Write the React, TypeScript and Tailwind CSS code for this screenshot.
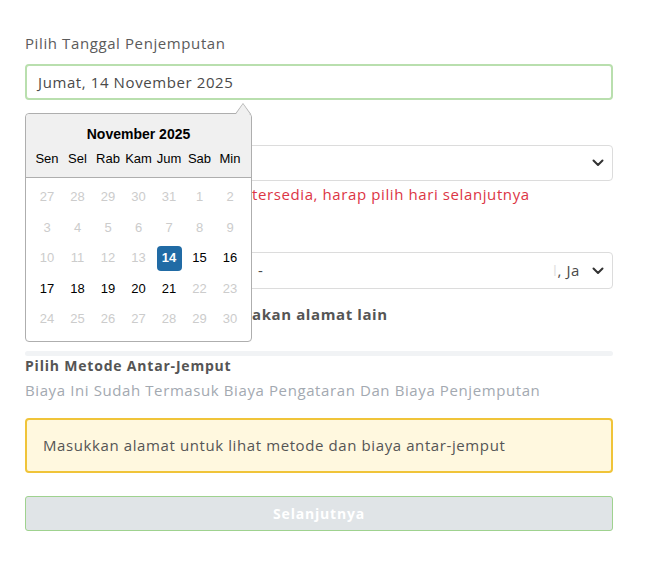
import React from "react";

const font = { fontFamily: '"Open Sans", "Noto Sans", sans-serif' };

function Chevron() {
  return (
    <svg width="12" height="8" viewBox="0 0 12 8" className="shrink-0">
      <path d="M1.5 1.5 L6 6 L10.5 1.5" fill="none" stroke="#333" strokeWidth="2" strokeLinecap="round" strokeLinejoin="round" />
    </svg>
  );
}

type Day = { n: number; on?: boolean; sel?: boolean };

const rows: Day[][] = [
  [27, 28, 29, 30, 31, 1, 2].map((n) => ({ n })),
  [3, 4, 5, 6, 7, 8, 9].map((n) => ({ n })),
  [
    { n: 10 }, { n: 11 }, { n: 12 }, { n: 13 },
    { n: 14, sel: true }, { n: 15, on: true }, { n: 16, on: true },
  ],
  [
    { n: 17, on: true }, { n: 18, on: true }, { n: 19, on: true }, { n: 20, on: true },
    { n: 21, on: true }, { n: 22 }, { n: 23 },
  ],
  [24, 25, 26, 27, 28, 29, 30].map((n) => ({ n })),
];

function Calendar() {
  return (
    <div
      className="absolute left-0 top-[49px] z-10 w-[227px] h-[229px] rounded-[4px] border border-[#aeaeae] bg-white tracking-normal"
      style={{ fontFamily: '"Liberation Sans", Arial, sans-serif' }}
    >
      <div className="absolute -top-[11px] left-[209px] w-0 h-0 border-x-[8px] border-x-transparent border-b-[11px] border-b-[#aeaeae]" />
      <div className="absolute -top-[10px] left-[210px] w-0 h-0 border-x-[7px] border-x-transparent border-b-[10px] border-b-[#f0f0f0]" />
      <div className="h-[64px] bg-[#f0f0f0] border-b border-[#aeaeae] rounded-t-[4px] flex flex-col items-center px-[8.5px]">
        <div className="mt-[10px] h-[20px] leading-[20px] text-[14px] font-bold text-black">November 2025</div>
        <div className="mt-[5px] grid grid-cols-[repeat(7,25px)] gap-x-[5.5px] text-[13px] text-black">
          {["Sen", "Sel", "Rab", "Kam", "Jum", "Sab", "Min"].map((d) => (
            <div key={d} className="w-[25px] text-center leading-[20px] whitespace-nowrap flex justify-center">
              {d}
            </div>
          ))}
        </div>
      </div>
      <div className="pt-[6.5px] px-[8.5px] grid grid-cols-[repeat(7,25px)] gap-x-[5.5px] gap-y-[5.5px] text-[13px]">
        {rows.flat().map((d, i) => (
          <div
            key={i}
            className={
              d.sel
                ? "w-[25px] h-[25px] rounded-[4px] bg-[#216ba5] text-white font-bold flex items-center justify-center"
                : d.on
                ? "w-[25px] h-[25px] text-black flex items-center justify-center"
                : "w-[25px] h-[25px] text-[#cccccc] flex items-center justify-center"
            }
          >
            {d.n}
          </div>
        ))}
      </div>
    </div>
  );
}

export default function App() {
  return (
    <div className="w-[646px] h-[576px] bg-white tracking-[0.6px]" style={font}>
      <div className="ml-[25px] w-[588px] pt-[32px] flex flex-col">
        <div className="text-[15px] leading-[22px] text-[#5b5b5b]">Pilih Tanggal Penjemputan</div>
        <div className="relative mt-[10px]">
          <div className="h-[36px] rounded-[4px] border-2 border-[#b9dfae] flex items-center pl-[11px] text-[15px] text-[#4a4a4a]">
            Jumat, 14 November 2025
          </div>
          <Calendar />
        </div>
        <div className="mt-[13px] h-[22px]" />
        <div className="mt-[10px] h-[36px] rounded-[4px] border border-[#dcdcdc] flex items-center justify-end pr-[8px]">
          <Chevron />
        </div>
        <div className="mt-[2px] text-[15px] leading-[22px] text-[#dc3545] whitespace-nowrap flex">
          <span className="w-[227px] shrink-0" />
          <span>tersedia, harap pilih hari selanjutnya</span>
        </div>
        <div className="mt-[16px] h-[22px]" />
        <div className="mt-[9px] h-[37px] rounded-[4px] border border-[#dcdcdc] flex items-center pr-[8px] pl-[232px] text-[15px] text-[#4a4a4a]">
          <span>-</span>
          <span className="flex-1" />
          <span className="text-[#e2e2e2]">l</span>
          <span className="mr-[12px]">, Ja</span>
          <Chevron />
        </div>
        <div className="mt-[14px] h-[22px] flex items-center whitespace-nowrap">
          <span className="w-[227px] shrink-0" />
          <span className="text-[15px] font-bold text-[#555]">akan alamat lain</span>
        </div>
        <div className="mt-[26px] h-[5px] rounded-full bg-[#f1f3f5]" />
        <div className="text-[14px] leading-[20px] font-bold text-[#555] tracking-[0.8px]">Pilih Metode Antar-Jemput</div>
        <div className="mt-[3px] text-[15px] leading-[22px] text-[#a3a9b1]">
          Biaya Ini Sudah Termasuk Biaya Pengataran Dan Biaya Penjemputan
        </div>
        <div className="mt-[17px] h-[55px] rounded-[4px] border-2 border-[#f0c439] bg-[#fff8df] flex items-center pl-[16px] text-[15px] text-[#555]">
          Masukkan alamat untuk lihat metode dan biaya antar-jemput
        </div>
        <div className="mt-[23px] h-[35px] rounded-[3px] border border-[#9fd28f] bg-[#e0e4e7] flex items-center justify-center text-[14px] font-bold text-white tracking-[0.8px]">
          Selanjutnya
        </div>
      </div>
    </div>
  );
}
